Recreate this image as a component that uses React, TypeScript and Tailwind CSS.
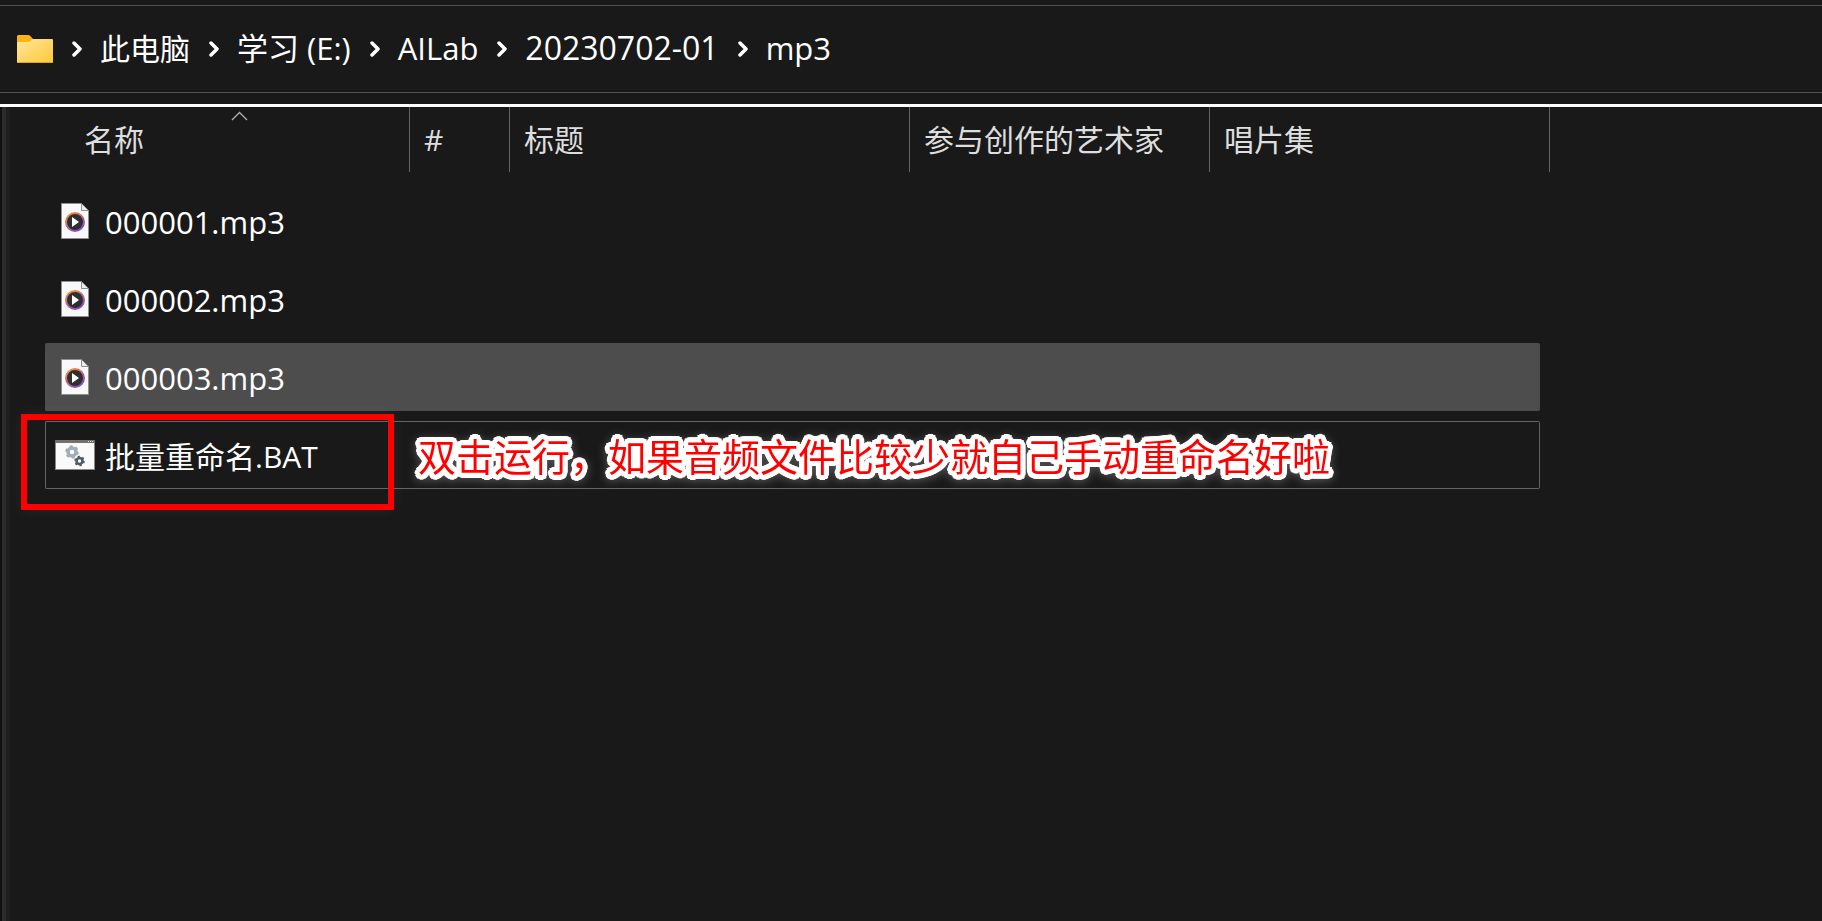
import { Fragment } from "react";

interface IFile {
  name: string;
  type: "audio" | "batch";
  state?: "selected" | "focused";
}

const crumbs = [
  { label: "此电脑", size: "text-[30px]" },
  { label: "学习 (E:)", size: "text-[31px]" },
  { label: "AILab", size: "text-[31px]" },
  { label: "20230702-01", size: "text-[32px]" },
  { label: "mp3", size: "text-[31px]" },
];

const columns = [
  { label: "#", width: "w-[100px]" },
  { label: "标题", width: "w-[400px]" },
  { label: "参与创作的艺术家", width: "w-[300px]" },
];

const files: IFile[] = [
  { name: "000001.mp3", type: "audio" },
  { name: "000002.mp3", type: "audio" },
  { name: "000003.mp3", type: "audio", state: "selected" },
  { name: "批量重命名.BAT", type: "batch", state: "focused" },
];

// round white outline: copies of the text on two circles
const outline = [3, 5]
  .flatMap(radius =>
    Array.from({ length: 24 }, (_, i) => {
      const angle = (i * Math.PI) / 12;
      const x = (radius * Math.cos(angle)).toFixed(2);
      const y = (radius * Math.sin(angle)).toFixed(2);
      return `${x}px ${y}px 0 #fff`;
    }),
  )
  .join(", ");

const FolderIcon = () => (
  <svg width="36" height="28" viewBox="0 0 36 28" aria-hidden="true">
    <defs>
      <linearGradient id="folder" x1="0" y1="0" x2="1" y2="1">
        <stop offset="0" stopColor="#ffe69b" />
        <stop offset="1" stopColor="#ffc838" />
      </linearGradient>
    </defs>
    <path d="M0 1.5Q0 0 1.5 0H11Q12.5 0 13.5 1.2L16 4V9H0Z" fill="#fbb414" />
    <path
      d="M0 8Q0 7 1 7H11Q12.500 7 13.500 6L15 4.500Q15.500 4 16.500 4H35Q36 4 36 5V27Q36 28 35 28H1Q0 28 0 27Z"
      fill="url(#folder)"
    />
    <path d="M0.500 27.500H35.500" stroke="#e0a52c" />
  </svg>
);

const Chevron = () => (
  <svg width="10" height="16" viewBox="0 0 10 16" aria-hidden="true">
    <path
      d="M2 2L8 8L2 14"
      fill="none"
      stroke="#fff"
      strokeWidth="3.500"
      strokeLinecap="round"
      strokeLinejoin="round"
    />
  </svg>
);

const AudioIcon = () => (
  <svg width="28" height="36" viewBox="0 0 28 36" aria-hidden="true">
    <defs>
      <linearGradient id="ring" x1="0" y1="0" x2="0.6" y2="1">
        <stop offset="0.1" stopColor="#f98b3c" />
        <stop offset="0.55" stopColor="#c06a86" />
        <stop offset="1" stopColor="#8a4fc0" />
      </linearGradient>
    </defs>
    <path d="M0.500 0.500H20.500L27.500 7.500V35.500H0.500Z" fill="#f9f9fb" stroke="#8f8f8f" />
    <path d="M20.500 0.500V7.500H27.500Z" fill="#ececec" stroke="#8f8f8f" />
    <circle cx="14" cy="19" r="9" fill="#2f2f33" stroke="url(#ring)" strokeWidth="2" />
    <path d="M11 14L18 19L11 24Z" fill="#fff" />
  </svg>
);

const BatchIcon = () => (
  <svg width="40" height="30" viewBox="0 0 40 30" aria-hidden="true">
    <rect width="40" height="30" fill="#8b8985" />
    <rect x="1" y="3" width="38" height="26" fill="#fafafa" />
    <path d="M0 0H40V3H0Z" fill="#73716d" />
    <path d="M33 1.500H38" stroke="#ddd" strokeDasharray="1 1" />
    <circle cx="17" cy="12" r="4" fill="none" stroke="#a3adb7" strokeWidth="3.500" />
    <circle cx="17" cy="12" r="5.800" fill="none" stroke="#a3adb7" strokeWidth="2" strokeDasharray="2.800 3.270" />
    <circle cx="24.500" cy="21" r="3" fill="none" stroke="#505a62" strokeWidth="2.600" />
    <circle cx="24.500" cy="21" r="4.500" fill="none" stroke="#505a62" strokeWidth="1.600" strokeDasharray="2.200 2.510" />
  </svg>
);

const boxStyle = (file: IFile) => {
  switch (file.state) {
    case "selected":
      return "bg-[#4d4d4d] border-[#4d4d4d]";
    case "focused":
      return "border-[#636363]";
    default:
      return "border-transparent";
  }
};

const FileRow = ({ file }: { file: IFile }) => (
  <tr>
    <td className="py-[5px] relative">
      <div
        className={`flex items-center h-[68px] border-y border-l rounded-l-[2px] ${boxStyle(file)}`}
      >
        <span className="flex justify-center w-[40px] ml-[9px] mr-[10px]">
          {file.type === "audio" ? <AudioIcon /> : <BatchIcon />}
        </span>
        <span
          className={
            file.type === "audio" ? "pt-[2px] text-[31px]" : "pt-[2px] text-[30px]"
          }
        >
          {file.name}
        </span>
      </div>
      {file.type === "batch" && (
        <>
          <div className="absolute -left-[24px] -top-[2px] w-[373px] h-[96px] border-[6px] border-[#ff0000] shadow-[0_0_16px_rgba(255,255,255,0.06)]" />
          <p
            className="absolute left-[373px] top-[16px] z-10 whitespace-nowrap text-[38px] leading-[48px] text-[#ff0000] drop-shadow-[0_2px_5px_rgba(255,255,255,0.25)]"
            style={{ textShadow: outline }}
          >
            双击运行，如果音频文件比较少就自己手动重命名好啦
          </p>
        </>
      )}
    </td>
    {columns.map(column => (
      <td key={column.label} className="py-[5px]">
        <div className={`h-[68px] border-y ${boxStyle(file)}`} />
      </td>
    ))}
    <td className="py-[5px]">
      <div className={`h-[68px] border-y border-r rounded-r-[2px] ${boxStyle(file)}`} />
    </td>
  </tr>
);

export default function App() {
  return (
    <div className="flex flex-col min-h-screen overflow-x-hidden bg-[#191919] text-white font-['Open_Sans','Noto_Sans_CJK_SC',sans-serif]">
      <nav className="flex items-center h-[88px] mt-[5px] pl-[17px] border-y border-[#535353] whitespace-nowrap">
        <FolderIcon />
        {crumbs.map(crumb => (
          <Fragment key={crumb.label}>
            <span className="ml-[19px] mr-[18px]">
              <Chevron />
            </span>
            <button type="button" className={`pb-[2px] ${crumb.size}`}>
              {crumb.label}
            </button>
          </Fragment>
        ))}
      </nav>

      <main className="flex grow mt-[11px] border-t-[3px] border-white">
        <div className="w-[10px] shrink-0 border-l-2 border-[#111] bg-[#1f1f1f]">
          <div className="w-[4px] h-full bg-[#2b2b2b]" />
        </div>
        <div className="pl-[35px]">
          <table className="table-fixed w-[1505px] border-collapse text-left">
            <colgroup>
              <col className="w-[365px]" />
              {columns.map(column => (
                <col key={column.label} className={column.width} />
              ))}
              <col className="w-[330px]" />
              <col className="w-[10px]" />
            </colgroup>
            <thead className="text-[30px] text-[#dedede]">
              <tr>
                <th className="pb-[10px] font-normal">
                  <button
                    type="button"
                    className="relative block w-full h-[65px] pl-[39px] border-r border-[#636363] text-left"
                  >
                    名称
                    <svg
                      className="absolute left-[186px] top-[4px]"
                      width="17"
                      height="10"
                      viewBox="0 0 17 10"
                      aria-hidden="true"
                    >
                      <path d="M1 9L8.500 1.500L16 9" fill="none" stroke="#b0b0b0" strokeWidth="1.300" />
                    </svg>
                  </button>
                </th>
                {columns.map(column => (
                  <th key={column.label} className="pb-[10px] font-normal">
                    <button
                      type="button"
                      className="block w-full h-[65px] pl-[14px] border-r border-[#636363] text-left whitespace-nowrap"
                    >
                      {column.label}
                    </button>
                  </th>
                ))}
                <th colSpan={2} className="pb-[10px] font-normal">
                  <button
                    type="button"
                    className="block w-full h-[65px] pl-[14px] border-r border-[#636363] text-left"
                  >
                    唱片集
                  </button>
                </th>
              </tr>
            </thead>
            <tbody>
              {files.map(file => (
                <FileRow key={file.name} file={file} />
              ))}
            </tbody>
          </table>
        </div>
      </main>
    </div>
  );
}
